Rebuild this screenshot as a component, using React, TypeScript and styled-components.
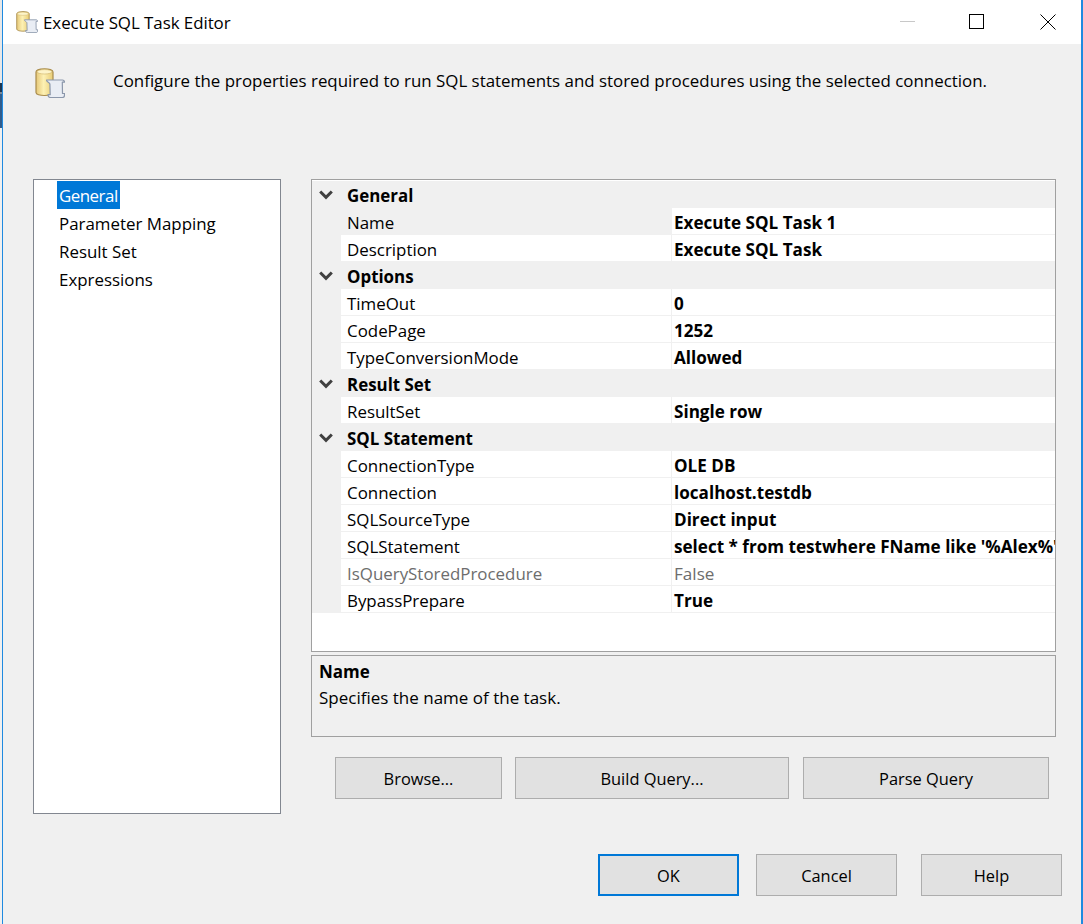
import React from "react";
import styled, { createGlobalStyle } from "styled-components";

const Global = createGlobalStyle`
  html, body { margin: 0; padding: 0; background: #f0f0f0; }
  * { box-sizing: border-box; }
`;

const FONT = `"Open Sans", "Noto Sans", "Liberation Sans", sans-serif`;

const Desktop = styled.div`
  width: 1083px;
  height: 924px;
  display: flex;
  overflow: hidden;
`;
const DesktopStrip = styled.div`
  width: 2px;
  flex: none;
  background: linear-gradient(
    to bottom,
    #e8e8e8 0 83px,
    #1c3550 83px 92px,
    #7d8894 92px 94px,
    #2f5c8c 94px 128px,
    #f0f0f0 128px 100%
  );
`;
const Window = styled.div`
  flex: 1;
  min-width: 0;
  display: flex;
  flex-direction: column;
  background: #f0f0f0;
  border-left: 1px solid #1f8ae0;
  border-right: 2px solid #1f8ae0;
  font-family: ${FONT};
  font-size: 16.9px;
  color: #000;
`;
const TitleBar = styled.div`
  height: 44px;
  flex: none;
  background: #fff;
  display: flex;
  align-items: center;
  padding-left: 13px;
`;
const TitleText = styled.div`
  margin-left: 5px;
  letter-spacing: -0.05px;
  flex: 1;
`;
const WinControls = styled.div`
  display: flex;
  align-items: center;
  margin-right: -2px;
`;
const WinButton = styled.div`
  width: 70px;
  height: 44px;
  display: flex;
  align-items: center;
  justify-content: center;
`;
const Header = styled.div`
  height: 135px;
  flex: none;
  display: flex;
  padding: 24px 0 0 32px;
`;
const HeaderText = styled.div`
  margin-left: 48px;
  line-height: 26px;
`;
const Main = styled.div`
  flex: 1;
  display: flex;
  padding-left: 30px;
  align-items: flex-start;
`;
const NavList = styled.div`
  width: 248px;
  height: 635px;
  flex: none;
  background: #fff;
  border: 1px solid #828790;
  padding: 1px 0 0 23px;
`;
const NavItem = styled.div<{ $selected?: boolean }>`
  height: 28px;
  padding: 2px 2px 0;
  line-height: 26px;
  width: fit-content;
  background: ${(p) => (p.$selected ? "#0078d7" : "transparent")};
  color: ${(p) => (p.$selected ? "#fff" : "#000")};
  letter-spacing: ${(p) => (p.$selected ? "-0.5px" : "0")};
`;
const RightColumn = styled.div`
  width: 745px;
  margin-left: 30px;
  flex: none;
  display: flex;
  flex-direction: column;
`;
const Grid = styled.div`
  height: 473px;
  border: 1px solid #a0a0a0;
  background: #fff;
  padding-top: 1px;
`;
const CategoryRow = styled.div`
  height: 27px;
  display: flex;
  align-items: center;
  background: #f0f0f0;
`;
const Chevron = styled.div`
  width: 35px;
  flex: none;
  display: flex;
  justify-content: center;
  padding-right: 8px;
`;
const CategoryText = styled.div`
  font-weight: 700;
  padding-top: 2px;
`;
const PropRow = styled.div`
  height: 27px;
  display: flex;
  background: #f0f0f0;
`;
const PropName = styled.div<{ $active?: boolean; $disabled?: boolean }>`
  margin-left: 29px;
  width: 330px;
  flex: none;
  padding: 2px 0 0 6px;
  display: flex;
  align-items: center;
  background: ${(p) => (p.$active ? "#f0f0f0" : "#fff")};
  border-bottom: 1px solid #f0f0f0;
  color: ${(p) => (p.$disabled ? "#6d6d6d" : "#000")};
`;
const PropValue = styled.div<{ $disabled?: boolean }>`
  flex: 1;
  min-width: 0;
  margin-left: 1px;
  padding: 2px 0 0 2px;
  display: flex;
  align-items: center;
  background: #fff;
  border-bottom: 1px solid #f0f0f0;
  font-size: 17.1px;
  font-weight: ${(p) => (p.$disabled ? 400 : 700)};
  color: ${(p) => (p.$disabled ? "#6d6d6d" : "#000")};
  white-space: nowrap;
  overflow: hidden;
`;
const DescBox = styled.div`
  height: 82px;
  margin-top: 3px;
  border: 1px solid #a0a0a0;
  padding: 3px 7px;
  line-height: 26px;
  font-size: 17px;
`;
const DescTitle = styled.div`
  font-weight: 700;
`;
const QueryButtons = styled.div`
  display: flex;
  margin-top: 20px;
  padding-left: 24px;
`;
const Button = styled.div<{ $w: number; $gap?: number; $focus?: boolean }>`
  width: ${(p) => p.$w}px;
  height: 42px;
  margin-left: ${(p) => p.$gap ?? 0}px;
  flex: none;
  display: flex;
  align-items: center;
  justify-content: center;
  font-size: 16.4px;
  background: #e1e1e1;
  border: ${(p) => (p.$focus ? "2px solid #0078d7" : "1px solid #adadad")};
`;
const Footer = styled.div`
  display: flex;
  justify-content: flex-end;
  padding: 0 19px 28px 0;
  flex: none;
`;

const TaskIcon = ({ size }: { size: number }) => (
  <svg width={size} height={size} viewBox="0 0 30 30">
    <defs>
      <linearGradient id={`c${size}`} x1="0" x2="1" y1="0" y2="0">
        <stop offset="0" stopColor="#e6c878" />
        <stop offset="0.45" stopColor="#fdf1b4" />
        <stop offset="1" stopColor="#e8cc74" />
      </linearGradient>
    </defs>
    <path d="M1 4C1 1.800 5 .8 9.500 .8S18 1.800 18 4v20.500c0 2-4 3-8.500 3S1 26.500 1 24.500Z" fill={`url(#c${size})`} stroke="#a98c4c" strokeWidth="1.200" />
    <ellipse cx="9.500" cy="3.800" rx="7.500" ry="2.200" fill="#fdf4c8" stroke="#cdb26a" strokeWidth="0.600" />
    <path d="M11.500 12H27.500c1.200 0 2 .9 2 2.200h-2.200l.2 11.300h2v1.800c0 1.200-.9 2.200-2.200 2.200H15.500c-1.500 0-2.500-1.100-2.500-2.800h2.200l-.3-10.700c-.6-1.700-3.400-1.900-3.400-4Z" fill="#e9edf4" stroke="#8b97ab" strokeWidth="1.200" strokeLinejoin="round" />
  </svg>
);

const ChevronIcon = () => (
  <svg width="14" height="10" viewBox="0 0 14 10">
    <path d="M1.200 1.500 7 7.300l5.800-5.800" fill="none" stroke="#404040" strokeWidth="3" />
  </svg>
);

type Prop = { name: string; value: string; active?: boolean; disabled?: boolean };
const sections: { title: string; props: Prop[] }[] = [
  {
    title: "General",
    props: [
      { name: "Name", value: "Execute SQL Task 1", active: true },
      { name: "Description", value: "Execute SQL Task" },
    ],
  },
  {
    title: "Options",
    props: [
      { name: "TimeOut", value: "0" },
      { name: "CodePage", value: "1252" },
      { name: "TypeConversionMode", value: "Allowed" },
    ],
  },
  { title: "Result Set", props: [{ name: "ResultSet", value: "Single row" }] },
  {
    title: "SQL Statement",
    props: [
      { name: "ConnectionType", value: "OLE DB" },
      { name: "Connection", value: "localhost.testdb" },
      { name: "SQLSourceType", value: "Direct input" },
      { name: "SQLStatement", value: "select * from testwhere FName like '%Alex%'" },
      { name: "IsQueryStoredProcedure", value: "False", disabled: true },
      { name: "BypassPrepare", value: "True" },
    ],
  },
];

export default function App() {
  return (
    <Desktop>
      <Global />
      <DesktopStrip />
      <Window>
        <TitleBar>
          <TaskIcon size={22} />
          <TitleText>Execute SQL Task Editor</TitleText>
          <WinControls>
            <WinButton>
              <svg width="16" height="2" viewBox="0 0 16 2"><path d="M0 .5h15" stroke="#c8c8c8" strokeWidth="1" /></svg>
            </WinButton>
            <WinButton>
              <svg width="18" height="16" viewBox="0 0 18 16"><rect x="0.500" y="0.500" width="14" height="14" fill="none" stroke="#000" /></svg>
            </WinButton>
            <WinButton>
              <svg width="16" height="16" viewBox="0 0 16 16"><path d="M.5.500l15 15M15.500.500l-15 15" stroke="#000" fill="none" /></svg>
            </WinButton>
          </WinControls>
        </TitleBar>
        <Header>
          <TaskIcon size={30} />
          <HeaderText>Configure the properties required to run SQL statements and stored procedures using the selected connection.</HeaderText>
        </Header>
        <Main>
          <NavList>
            <NavItem $selected>General</NavItem>
            <NavItem>Parameter Mapping</NavItem>
            <NavItem>Result Set</NavItem>
            <NavItem>Expressions</NavItem>
          </NavList>
          <RightColumn>
            <Grid>
              {sections.map((s) => (
                <React.Fragment key={s.title}>
                  <CategoryRow>
                    <Chevron><ChevronIcon /></Chevron>
                    <CategoryText>{s.title}</CategoryText>
                  </CategoryRow>
                  {s.props.map((p) => (
                    <PropRow key={p.name}>
                      <PropName $active={p.active} $disabled={p.disabled}>{p.name}</PropName>
                      <PropValue $disabled={p.disabled}>{p.value}</PropValue>
                    </PropRow>
                  ))}
                </React.Fragment>
              ))}
            </Grid>
            <DescBox>
              <DescTitle>Name</DescTitle>
              <div>Specifies the name of the task.</div>
            </DescBox>
            <QueryButtons>
              <Button $w={167}>Browse...</Button>
              <Button $w={274} $gap={13}>Build Query...</Button>
              <Button $w={246} $gap={14}>Parse Query</Button>
            </QueryButtons>
          </RightColumn>
        </Main>
        <Footer>
          <Button $w={141} $focus>OK</Button>
          <Button $w={141} $gap={17}>Cancel</Button>
          <Button $w={141} $gap={24}>Help</Button>
        </Footer>
      </Window>
    </Desktop>
  );
}
